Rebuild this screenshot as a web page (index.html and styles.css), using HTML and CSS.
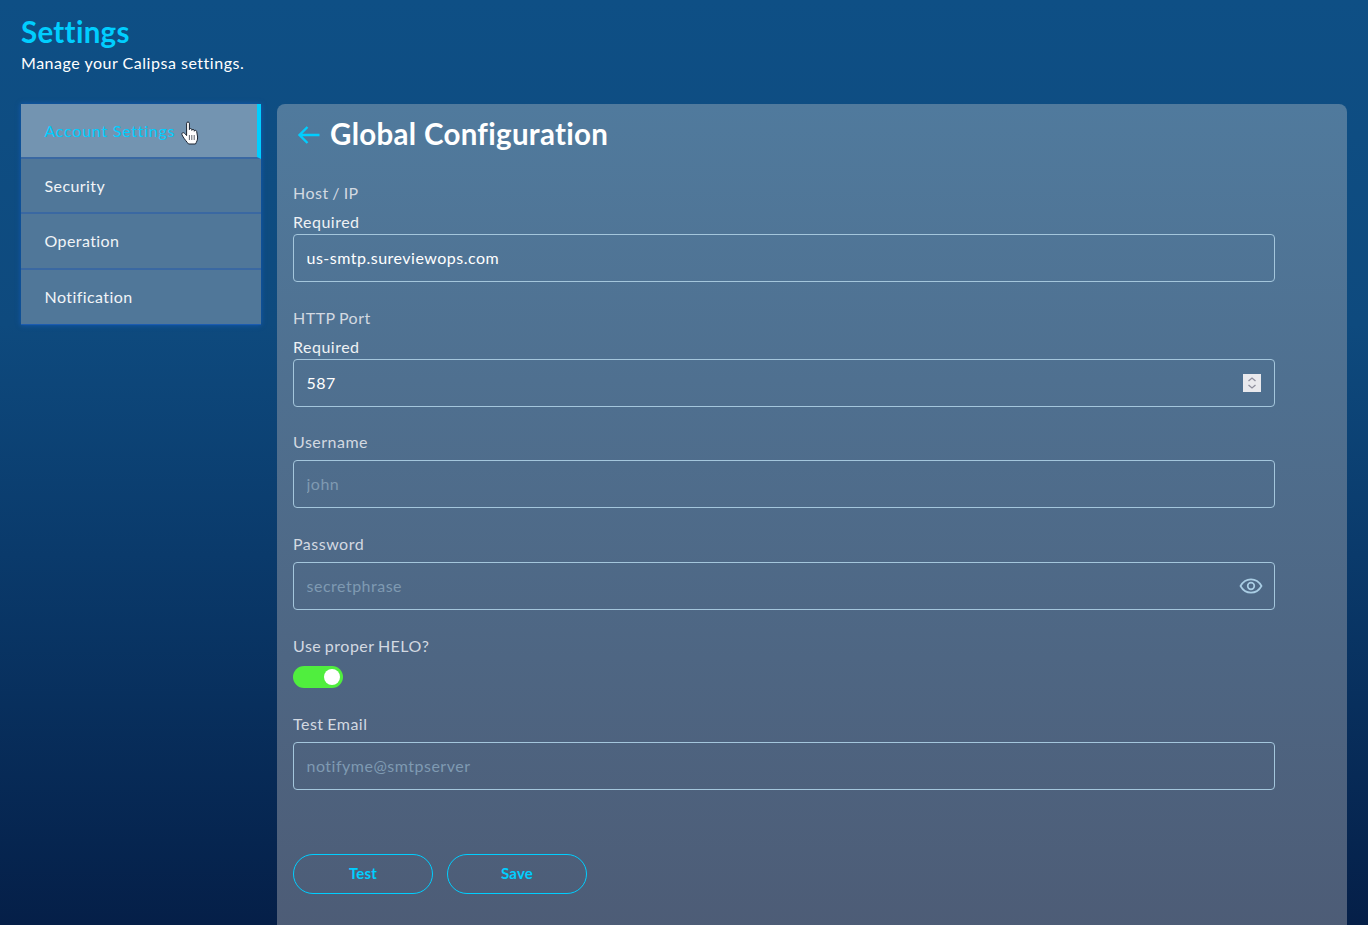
FILE: index.html
```html
<!DOCTYPE html>
<html lang="en">
<head>
<meta charset="utf-8">
<title>Settings</title>
<link rel="stylesheet" href="styles.css">
</head>
<body>
<div class="page">
  <header class="page-head">
    <h1 class="page-title">Settings</h1>
    <p class="page-sub">Manage your Calipsa settings.</p>
  </header>
  <div class="layout">
    <nav class="side">
      <a class="side-item active">Account Settings
        <svg class="cursor" viewBox="0 0 18 24" width="18" height="24"><path d="M5.600 2.200C5.600 .6 8.400 .6 8.400 2.200V8.600C8.400 7.200 10.800 7.200 10.800 8.600V9.400C10.800 8 13.200 8 13.200 9.400V10.200C13.200 9 15.700 9 15.700 10.600L16.600 16C16.800 19 15.500 21 14.500 23H7.500C6 21 4 19 1.600 15C.4 13 .9 12 1.800 11.700C2.800 11.400 4 12.600 5.600 14.600Z" fill="#fff" stroke="#1a2330" stroke-width="1" stroke-linejoin="round"/><path d="M8.400 14v5M10.800 14v5M13.200 14v5" stroke="#1a2330" stroke-width=".7"/></svg>
      </a>
      <a class="side-item">Security</a>
      <a class="side-item">Operation</a>
      <a class="side-item">Notification</a>
    </nav>
    <main class="panel">
      <div class="panel-head">
        <svg class="back" viewBox="0 0 24 24" width="24" height="24"><path d="M22.500 12H2.500M10.500 4l-8 8 8 8" fill="none" stroke="#00ceff" stroke-width="2.400"/></svg>
        <h2 class="panel-title">Global Configuration</h2>
      </div>
      <form class="form">
        <div class="field">
          <label class="label">Host / IP</label>
          <div class="req">Required</div>
          <div class="input-wrap"><input class="input" type="text" value="us-smtp.sureviewops.com"></div>
        </div>
        <div class="field">
          <label class="label">HTTP Port</label>
          <div class="req">Required</div>
          <div class="input-wrap"><input class="input" type="text" value="587">
            <span class="spin"><svg viewBox="0 0 18 18" width="18" height="18"><path d="M5.500 7 9 4l3.500 3M5.500 11 9 14l3.500-3" fill="none" stroke="#8f8f9d" stroke-width="1.300"/></svg></span>
          </div>
        </div>
        <div class="field">
          <label class="label label-gap">Username</label>
          <div class="input-wrap"><input class="input" type="text" placeholder="john"></div>
        </div>
        <div class="field">
          <label class="label label-gap">Password</label>
          <div class="input-wrap"><input class="input" type="text" placeholder="secretphrase">
            <svg class="eye" viewBox="0 0 24 24" width="24" height="24"><path d="M1.500 12C4 7.500 7.800 5.300 12 5.300s8 2.200 10.500 6.700C20 16.500 16.200 18.700 12 18.700S4 16.500 1.500 12z" fill="none" stroke="#a9cde4" stroke-width="1.700"/><circle cx="12" cy="12" r="3.300" fill="none" stroke="#a9cde4" stroke-width="1.700"/></svg>
          </div>
        </div>
        <div class="field">
          <label class="label">Use proper HELO?</label>
          <div class="toggle"><span class="knob"></span></div>
        </div>
        <div class="field">
          <label class="label label-gap">Test Email</label>
          <div class="input-wrap"><input class="input" type="text" placeholder="notifyme@smtpserver"></div>
        </div>
        <div class="actions">
          <button class="btn" type="button">Test</button>
          <button class="btn" type="button">Save</button>
        </div>
      </form>
    </main>
  </div>
</div>
</body>
</html>
```
FILE: styles.css
```css
* { box-sizing: border-box; }
html, body { margin: 0; height: 925px; overflow: hidden; }
body {
  font-family: "Lato", "Noto Sans", sans-serif;
  color: #fff;
  background: linear-gradient(180deg, #0e4f85 0%, #0e4a7e 35%, #0a3a6b 60%, #051f48 100%);
}
.page { padding: 15px 21px 0; }
.page-head { height: 89px; }
.page-title { margin: 0; font-size: 29.500px; line-height: 34px; font-weight: 700; color: #00ceff; letter-spacing: .3px; }
.page-sub { margin: 2px 0 0; font-size: 16px; line-height: 24px; font-weight: 400; letter-spacing: .52px; }
.layout { display: flex; gap: 16px; align-items: flex-start; }
.side {
  width: 240px;
  display: flex;
  flex-direction: column;
  background: #507799;
  box-shadow: 0 0 5px rgba(22, 96, 200, .75);
  border-bottom: 1px solid #1d5cb0;
}
.side-item {
  position: relative;
  display: flex;
  align-items: center;
  height: 55.200px;
  padding: 0 23.500px 1px;
  font-size: 16px;
  font-weight: 400;
  letter-spacing: .42px;
  color: #f1f4f7;
  border-bottom: 2px solid #3a68a2;
}
.side-item:last-child { height: 54.500px; border-bottom: 0; }
.side-item.active { background: #7394b1; color: #00ceff; border-right: 4px solid #00ceff; letter-spacing: .75px; }
.cursor { position: absolute; left: 160px; top: 17px; }
.panel {
  width: 1070px;
  height: 830px;
  padding: 0 16px;
  border-radius: 8px 8px 0 0;
  background: linear-gradient(180deg, #507a9d 0%, #4d5c76 100%);
}
.panel-head { display: flex; align-items: center; gap: 9px; height: 60px; padding-left: 4px; }
.back { flex: none; margin-top: 2px; }
.panel-title { margin: 0; font-size: 29.500px; line-height: 34px; font-weight: 700; letter-spacing: .3px; }
.form { display: flex; flex-direction: column; padding-top: 18.200px; }
.field { margin-bottom: 25.600px; }
.label { display: block; height: 20px; font-size: 16px; line-height: 21px; letter-spacing: .5px; word-spacing: -1px; color: #d3d9e1; }
.label-gap { margin-bottom: 8px; line-height: 19px; }
.req { height: 31.400px; padding-top: 9px; font-size: 16px; line-height: 22px; letter-spacing: .5px; color: #eef1f4; }
.input-wrap { position: relative; width: 982px; }
.input {
  display: block;
  width: 100%;
  height: 48px;
  padding: 0 12.500px 1px;
  border: 1px solid #a4c6dc;
  border-radius: 4px;
  background: transparent;
  color: #fff;
  font: 400 16px "Lato", "Noto Sans", sans-serif;
  letter-spacing: .5px;
  outline: 0;
}
.input::placeholder { color: #7f9ab2; opacity: 1; }
.spin { position: absolute; right: 14px; top: 15px; width: 18px; height: 18px; background: #e9e9ed; }
.spin svg { display: block; }
.eye { position: absolute; right: 12px; top: 12px; }
.toggle {
  display: flex;
  justify-content: flex-end;
  align-items: center;
  width: 50px;
  height: 22px;
  margin-top: 10.600px;
  padding-right: 3px;
  border-radius: 11px;
  background: #50ee3e;
}
.knob { width: 16px; height: 16px; border-radius: 50%; background: #fff; }
.actions { display: flex; gap: 14px; margin-top: 38.400px; }
.btn {
  width: 140px;
  height: 40px;
  padding: 0 0 2px;
  border: 1px solid #00ceff;
  border-radius: 20px;
  background: transparent;
  color: #00ceff;
  font: 700 15px "Lato", "Noto Sans", sans-serif;
  letter-spacing: .2px;
}
```
